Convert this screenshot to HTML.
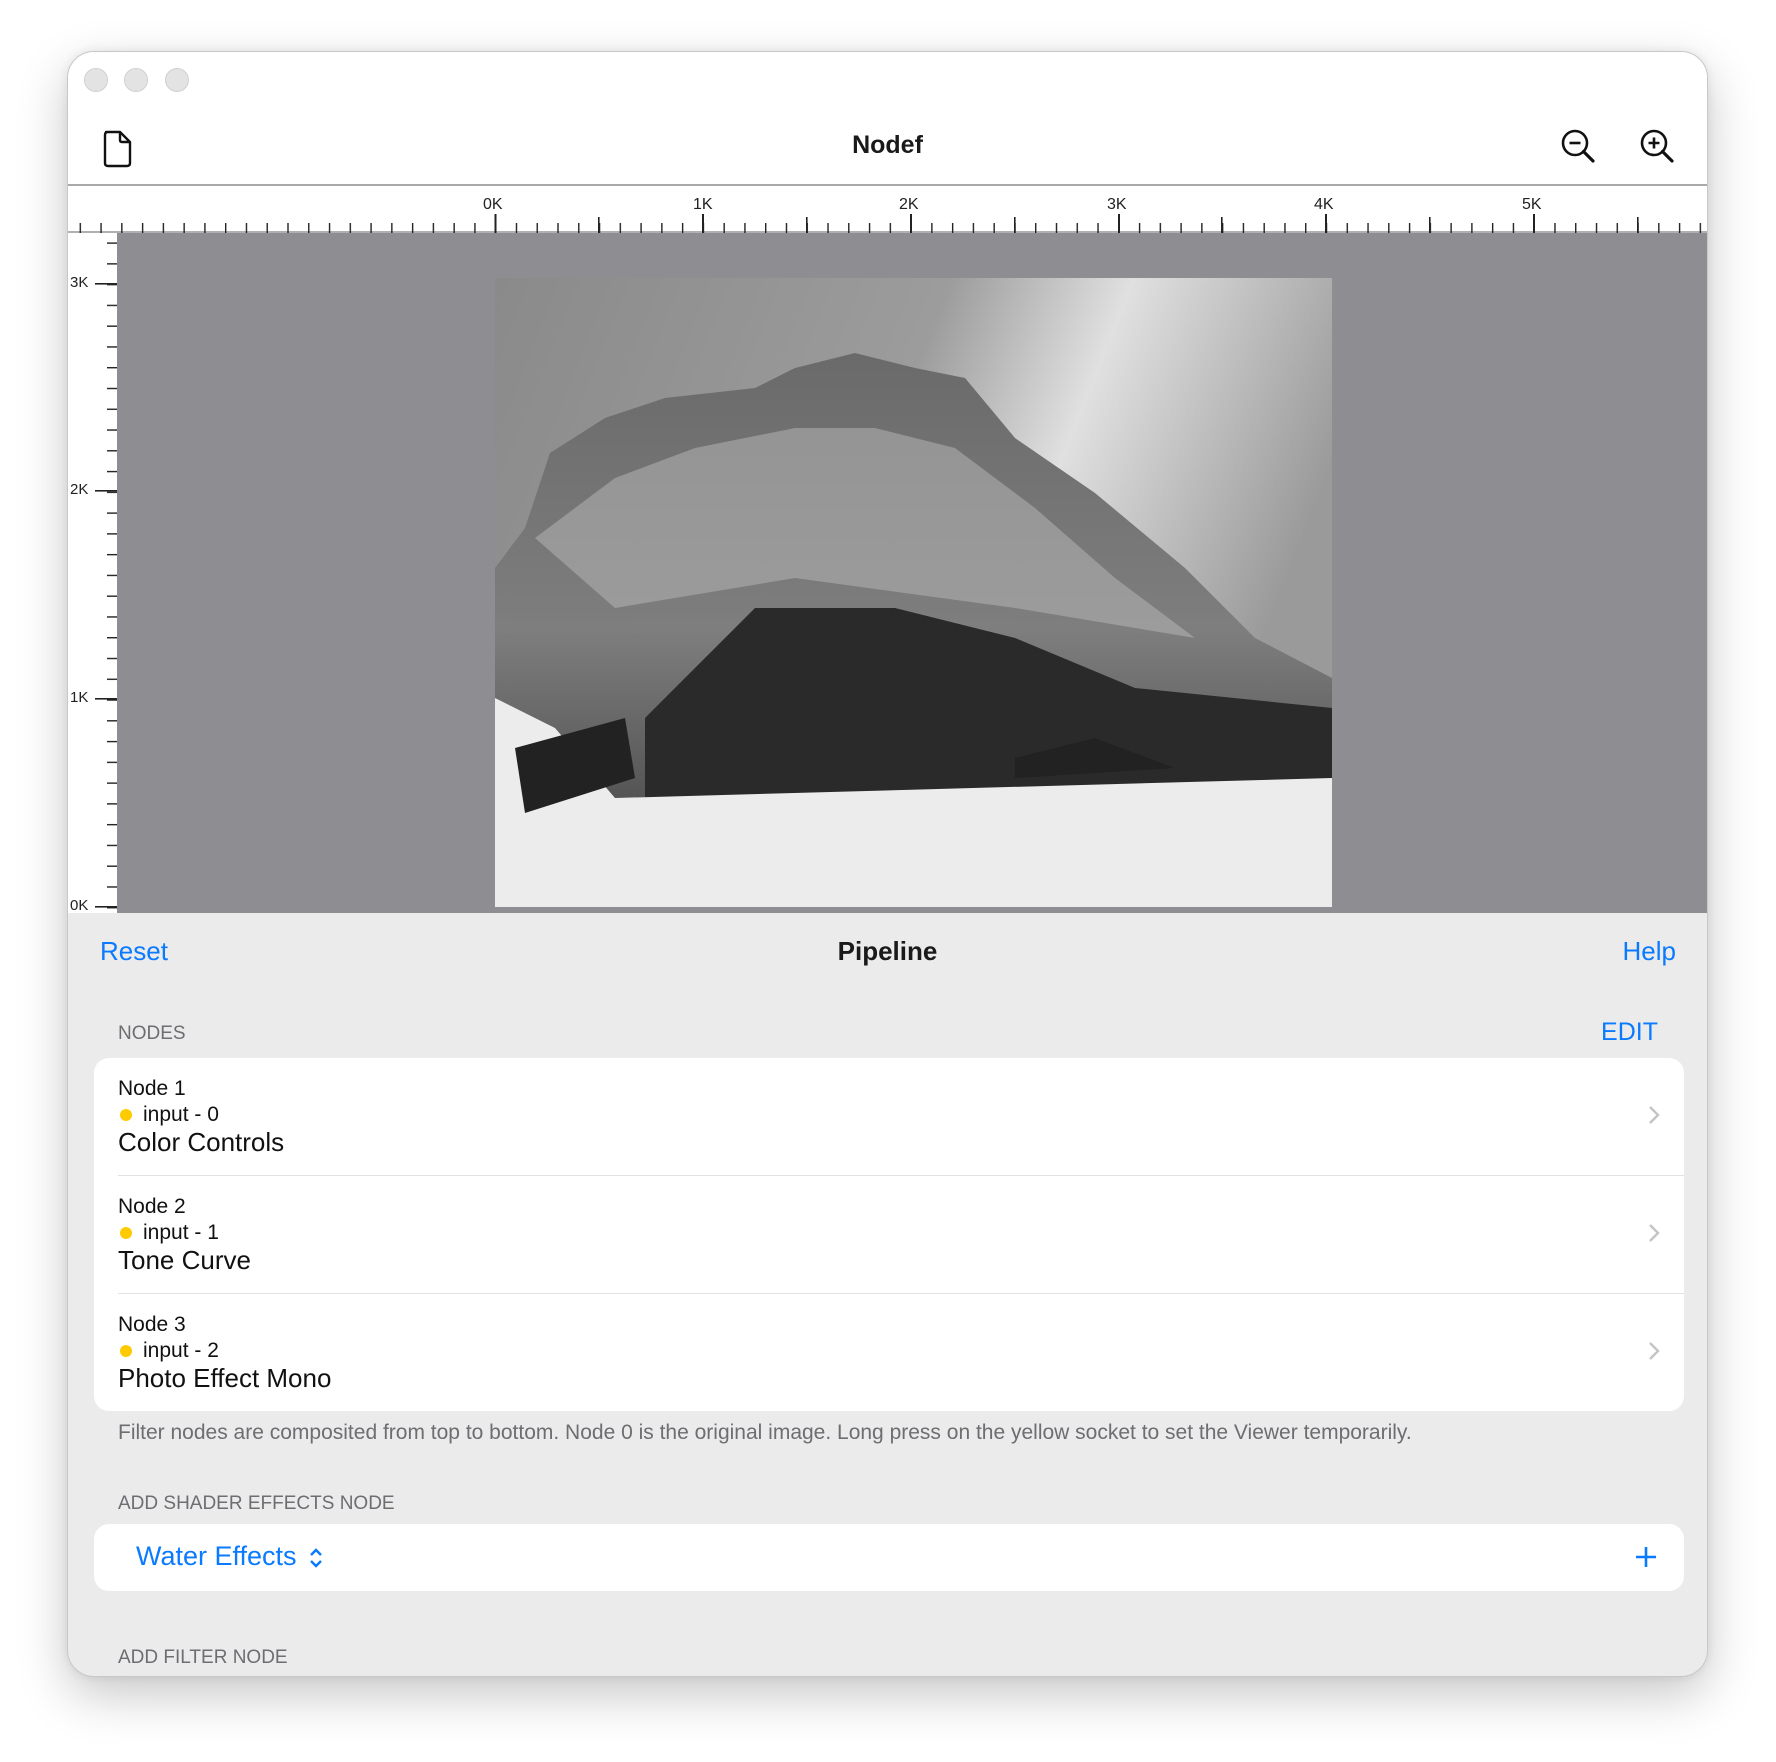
<!DOCTYPE html>
<html><head><meta charset="utf-8"><style>
*{margin:0;padding:0;box-sizing:border-box}
body{width:1776px;height:1762px;background:#fff;position:relative;overflow:hidden;font-family:"Liberation Sans",sans-serif}
.win{position:absolute;left:67px;top:51px;width:1641px;height:1626px;border-radius:27px;background:#ebebeb;overflow:hidden;border:1px solid #c8c8c8;box-shadow:0 18px 50px rgba(0,0,0,.22),0 0 10px rgba(0,0,0,.08)}
.abs{position:absolute}
.tl{position:absolute;top:16px;width:24px;height:24px;border-radius:50%;background:#e3e3e3;border:1px solid #d0d0d0}
.top{position:absolute;left:0;top:0;width:100%;height:134px;background:#fff;border-bottom:2px solid #a9a9a9}
.hr{position:absolute;left:0;top:134px;width:100%;height:47px;background:#fff;border-bottom:2px solid #b0b0b0}
.vr{position:absolute;left:0;top:181px;width:49px;height:680px;background:#fff}
.grey{position:absolute;left:49px;top:181px;right:0;height:680px;background:#8e8d92}
.lbl{position:absolute;font-size:16px;color:#222}
.blue{color:#0a7aff}
.sec{position:absolute;left:50px;font-size:19px;color:#6d6d72}
.card{position:absolute;left:26px;width:1590px;background:#fff;border-radius:15px}
.row{position:absolute;left:24px;right:0;height:118px}
.row .n{position:absolute;left:0;top:19px;font-size:21px;color:#111}
.row .i{position:absolute;left:25px;top:45px;font-size:21px;color:#111}
.row .d{position:absolute;left:2px;top:51px;width:12px;height:12px;border-radius:50%;background:#fecb00}
.row .t{position:absolute;left:0;top:69px;font-size:26px;color:#111}
.row .c{position:absolute;right:24px;top:47px}
.sep{position:absolute;left:24px;right:0;height:1px;background:#e2e2e4}
</style></head><body>
<div class="win">
 <div class="top">
  <div class="tl" style="left:16px"></div><div class="tl" style="left:56px"></div><div class="tl" style="left:97px"></div>
  <svg class="abs" style="left:34px;top:78px" width="32" height="38" viewBox="0 0 32 38"><path d="M4 2 H18 L28 12 V33 Q28 36 25 36 H6 Q3 36 3 33 V5 Q3 2 6 2 Z M18 2 V10 Q18 12 20 12 H28" fill="none" stroke="#111" stroke-width="2.4" stroke-linejoin="round"/></svg>
  <div class="abs" style="left:0;width:100%;top:79px;text-align:center;font-size:25px;font-weight:bold;color:#1a1a1a">Nodef</div>
  <svg class="abs" style="left:1491px;top:75px" width="40" height="40" viewBox="0 0 40 40"><circle cx="16" cy="16" r="12" fill="none" stroke="#111" stroke-width="2.6"/><path d="M24.5 24.5 L34 34" stroke="#111" stroke-width="3.2" stroke-linecap="round"/><path d="M10.5 16 H21.5" stroke="#111" stroke-width="2.6"/></svg>
  <svg class="abs" style="left:1570px;top:75px" width="40" height="40" viewBox="0 0 40 40"><circle cx="16" cy="16" r="12" fill="none" stroke="#111" stroke-width="2.6"/><path d="M24.5 24.5 L34 34" stroke="#111" stroke-width="3.2" stroke-linecap="round"/><path d="M10.5 16 H21.5 M16 10.5 V21.5" stroke="#111" stroke-width="2.6"/></svg>
 </div>
 <div class="hr">
  <svg class="abs" style="left:0;top:0" width="1641" height="47">
   <defs><pattern id="hp" patternUnits="userSpaceOnUse" x="11.6" y="0" width="20.77" height="47"><rect x="0" y="37" width="1.4" height="10" fill="#222"/></pattern></defs>
   <rect x="0" y="0" width="1641" height="47" fill="url(#hp)"/>
   <g fill="#222">
    <rect x="530" y="31" width="1.6" height="16"/><rect x="738" y="31" width="1.6" height="16"/><rect x="946" y="31" width="1.6" height="16"/><rect x="1153" y="31" width="1.6" height="16"/><rect x="1361" y="31" width="1.6" height="16"/><rect x="1569" y="31" width="1.6" height="16"/>
    <rect x="426.5" y="28" width="2" height="19"/><rect x="634" y="28" width="2" height="19"/><rect x="842" y="28" width="2" height="19"/><rect x="1050" y="28" width="2" height="19"/><rect x="1257" y="28" width="2" height="19"/><rect x="1465" y="28" width="2" height="19"/>
   </g>
  </svg>
  <div class="lbl" style="left:415px;top:10px">0K</div>
  <div class="lbl" style="left:625px;top:10px">1K</div>
  <div class="lbl" style="left:831px;top:10px">2K</div>
  <div class="lbl" style="left:1039px;top:10px">3K</div>
  <div class="lbl" style="left:1246px;top:10px">4K</div>
  <div class="lbl" style="left:1454px;top:10px">5K</div>
 </div>
 <div class="vr">
  <svg class="abs" style="left:0;top:0" width="49" height="680">
   <defs><pattern id="vp" patternUnits="userSpaceOnUse" x="0" y="9.4" width="49" height="20.77"><rect x="39" y="0" width="10" height="1.4" fill="#222"/></pattern></defs>
   <rect x="0" y="0" width="49" height="680" fill="url(#vp)"/>
   <g fill="#222"><rect x="27" y="50" width="22" height="1.6"/><rect x="27" y="257" width="22" height="1.6"/><rect x="27" y="465" width="22" height="1.6"/><rect x="27" y="673" width="22" height="1.6"/></g>
  </svg>
  <div class="lbl" style="left:2px;top:41px;font-size:15px">3K</div>
  <div class="lbl" style="left:2px;top:248px;font-size:15px">2K</div>
  <div class="lbl" style="left:2px;top:456px;font-size:15px">1K</div>
  <div class="lbl" style="left:2px;top:664px;font-size:15px">0K</div>
 </div>
 <div class="grey"></div>
 <svg class="abs" style="left:427px;top:226px" width="837" height="629" viewBox="0 0 837 629">
  <defs>
   <linearGradient id="sky" x1="0" y1="0" x2="1" y2="0.3"><stop offset="0" stop-color="#8a8a8a"/><stop offset=".5" stop-color="#9c9c9c"/><stop offset=".7" stop-color="#e0e0e0"/><stop offset="1" stop-color="#9a9a9a"/></linearGradient>
   <linearGradient id="mt" x1="0" y1="0" x2="0" y2="1"><stop offset="0" stop-color="#6a6a6a"/><stop offset=".5" stop-color="#7e7e7e"/><stop offset="1" stop-color="#3a3a3a"/></linearGradient>
  </defs>
  <rect width="837" height="629" fill="url(#sky)"/>
  <path d="M0 290 L30 250 L55 175 L110 140 L170 120 L260 110 L300 90 L360 75 L420 90 L470 100 L520 160 L600 215 L690 290 L760 360 L837 400 L837 629 L0 629 Z" fill="url(#mt)"/>
  <path d="M40 260 L120 200 L200 170 L300 150 L380 150 L460 170 L540 230 L620 300 L700 360 L520 330 L300 300 L120 330 Z" fill="#b9b9b9" opacity=".5"/>
  <path d="M150 440 L260 330 L400 330 L520 360 L640 410 L837 430 L837 520 L150 520 Z" fill="#2a2a2a"/>
  <path d="M0 420 L60 450 L120 520 L837 500 L837 629 L0 629 Z" fill="#ececec"/>
  <path d="M20 470 L130 440 L140 500 L30 535 Z" fill="#222"/>
  <path d="M520 480 L600 460 L680 490 L520 500 Z" fill="#222"/>
 </svg>
 <div class="abs blue" style="left:32px;top:884px;font-size:26px">Reset</div>
 <div class="abs" style="left:0;width:100%;top:884px;text-align:center;font-size:26px;font-weight:bold;color:#1a1a1a">Pipeline</div>
 <div class="abs blue" style="right:31px;top:884px;font-size:26px">Help</div>
 <div class="sec" style="top:971px">NODES</div>
 <div class="abs blue" style="right:49px;top:966px;font-size:25px">EDIT</div>
 <div class="card" style="top:1006px;height:353px">
  <div class="row" style="top:0"><div class="n">Node 1</div><div class="d"></div><div class="i">input - 0</div><div class="t">Color Controls</div><svg class="c" width="12" height="20" viewBox="0 0 12 20"><path d="M2 2 L10 10 L2 18" fill="none" stroke="#c4c4c7" stroke-width="2.4"/></svg></div>
  <div class="sep" style="top:117px"></div>
  <div class="row" style="top:118px"><div class="n">Node 2</div><div class="d"></div><div class="i">input - 1</div><div class="t">Tone Curve</div><svg class="c" width="12" height="20" viewBox="0 0 12 20"><path d="M2 2 L10 10 L2 18" fill="none" stroke="#c4c4c7" stroke-width="2.4"/></svg></div>
  <div class="sep" style="top:235px"></div>
  <div class="row" style="top:236px"><div class="n">Node 3</div><div class="d"></div><div class="i">input - 2</div><div class="t">Photo Effect Mono</div><svg class="c" width="12" height="20" viewBox="0 0 12 20"><path d="M2 2 L10 10 L2 18" fill="none" stroke="#c4c4c7" stroke-width="2.4"/></svg></div>
 </div>
 <div class="abs" style="left:50px;top:1369px;font-size:21px;color:#6d6d72">Filter nodes are composited from top to bottom. Node 0 is the original image. Long press on the yellow socket to set the Viewer temporarily.</div>
 <div class="sec" style="top:1441px">ADD SHADER EFFECTS NODE</div>
 <div class="card" style="top:1472px;height:67px">
  <div class="abs blue" style="left:42px;top:17px;font-size:27px">Water Effects</div>
  <svg class="abs" style="left:214px;top:21px" width="16" height="26" viewBox="0 0 16 26"><path d="M3 10 L8 5 L13 10 M3 16 L8 21 L13 16" fill="none" stroke="#0a7aff" stroke-width="2.4"/></svg>
  <svg class="abs" style="right:26px;top:21px" width="24" height="24" viewBox="0 0 24 24"><path d="M12 2 V22 M2 12 H22" stroke="#0a7aff" stroke-width="2.6"/></svg>
 </div>
 <div class="sec" style="top:1595px">ADD FILTER NODE</div>
</div>
</body></html>
